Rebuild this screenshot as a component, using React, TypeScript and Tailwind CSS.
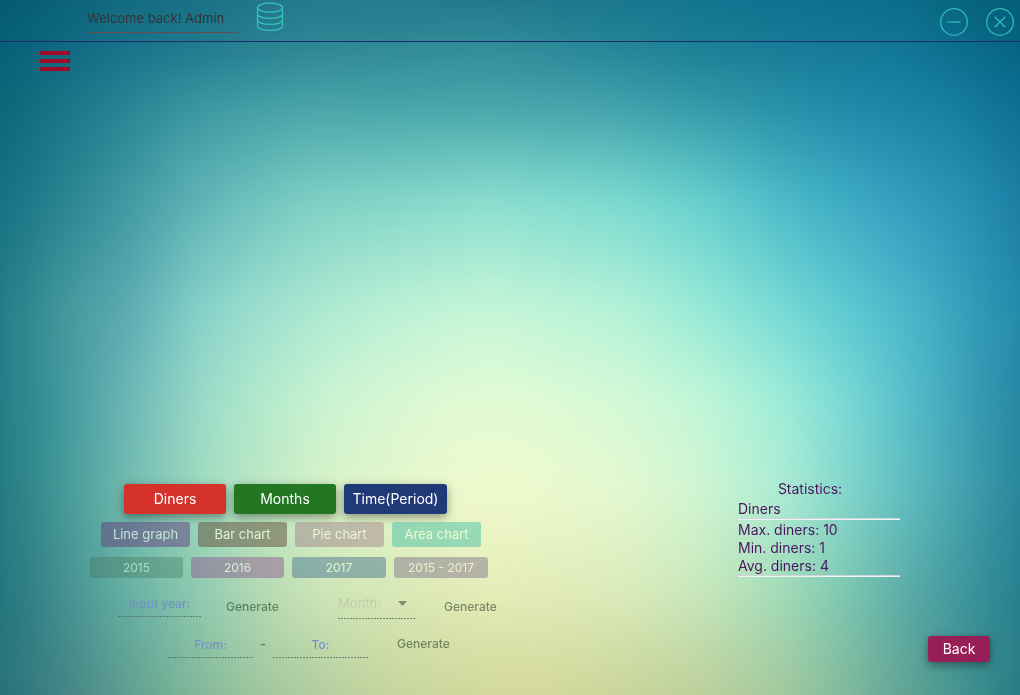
import React from "react";

// Horizontal bands of colour; each one fades in over the band above it.
const bands = [
  "bg-[linear-gradient(to_right,#045a6e_0%,#136b80_12%,#25788b_30%,#237689_48%,#117490_69%,#0b6d88_88%,#055c74_100%)]",
  "bg-[linear-gradient(to_right,#066078_0%,#16708a_11%,#2f8795_30%,#348f9b_48%,#1c8096_69%,#127898_88%,#066482_100%)] [mask-image:linear-gradient(to_bottom,transparent_0%,black_7%)]",
  "bg-[linear-gradient(to_right,#0d6577_0%,#207f8e_10%,#3d98a2_20%,#48a3a9_30%,#46a5aa_48%,#43a2ac_59%,#3299a8_69%,#1f89a8_83%,#177fa0_93%,#0c6f92_100%)] [mask-image:linear-gradient(to_bottom,transparent_7%,black_15%)]",
  "bg-[linear-gradient(to_right,#157080_0%,#38909c_10%,#62b6b8_20%,#7ed0c4_30%,#8cdfd0_48%,#7cdbd0_61%,#67d0cf_69%,#48b8c8_78%,#359fc0_88%,#2890b4_95%,#1b7ea3_100%)] [mask-image:linear-gradient(to_bottom,transparent_15%,black_29%)]",
  "bg-[linear-gradient(to_right,#237a86_0%,#44989c_6%,#5faeb5_13%,#85d0c8_19%,#9ddfd0_25%,#b0ead2_32%,#bcf1d6_38%,#c8f6d8_48%,#b6f2d8_61%,#9cecd7_68%,#7cdcd6_76%,#5dcbd2_83%,#49b4c9_90%,#2289a9_100%)] [mask-image:linear-gradient(to_bottom,transparent_29%,black_45%)]",
  "bg-[linear-gradient(to_right,#237a85_0%,#3f989d_6%,#71b9b8_13%,#9cdcc9_20%,#b5eacc_26%,#ccf4d2_32%,#e1fad4_44%,#e2fbd4_50%,#d5f9d6_61%,#c2f6d8_69%,#9eedd8_77%,#7bd9d6_83%,#51bac8_90%,#379ab3_96%,#2585a0_100%)] [mask-image:linear-gradient(to_bottom,transparent_45%,black_58%)]",
  "bg-[linear-gradient(to_right,#22777f_0%,#449998_6%,#74bdb0_13%,#a2dcc0_20%,#bfe8c3_26%,#d8f2c8_32%,#eef9cc_44%,#f0facc_50%,#e4f8d0_61%,#cff5d2_69%,#abebd4_77%,#83d6cb_83%,#5ab8bd_90%,#3d9aa8_96%,#27849a_100%)] [mask-image:linear-gradient(to_bottom,transparent_58%,black_71%)]",
  "bg-[linear-gradient(to_right,#20747c_0%,#448e90_6%,#68b2a5_13%,#92cbb0_20%,#b5dbb3_26%,#cfe5b6_32%,#e5ebb7_48%,#dbeab9_61%,#c6e6ba_69%,#a0dab6_77%,#7cc6b0_83%,#55a6a5_90%,#38909a_96%,#257d8c_100%)] [mask-image:linear-gradient(to_bottom,transparent_71%,black_86%)]",
  "bg-[linear-gradient(to_right,#27717a_0%,#438385_6%,#60a090_13%,#80b698_19%,#9cc39c_25%,#b3cd9d_32%,#c6d49c_39%,#d0d798_48%,#d2d798_54%,#bbce9a_69%,#a1c79d_77%,#80b89b_83%,#5b9f92_90%,#3c8d8c_96%,#2a7983_100%)] [mask-image:linear-gradient(to_bottom,transparent_86%,black_100%)]",
];

const topics = [
  { label: "Diners", style: "w-[102px] bg-[#d5322b]" },
  { label: "Months", style: "w-[102px] bg-[#237722]" },
  { label: "Time(Period)", style: "w-[103px] bg-[#203a78]" },
];

const charts = [
  { label: "Line graph", style: "bg-[#663c7c]/50 text-[#bfe6d6]" },
  { label: "Bar chart", style: "bg-[#5f4a35]/50 text-[#dcf3d6]" },
  { label: "Pie chart", style: "bg-[#9c7886]/45 text-[#e8f5d2]" },
  { label: "Area chart", style: "bg-[#45bfa5]/50 text-[#edfad2]" },
];

const years = [
  { label: "2015", style: "w-[93px] bg-[#406f55]/35 text-[#aadcc4]" },
  { label: "2016", style: "w-[93px] bg-[#8f508e]/45 text-[#d2efd3]" },
  { label: "2017", style: "w-[94px] bg-[#4a7894]/50 text-[#e3f4d0]" },
  { label: "2015 - 2017", style: "w-[94px] bg-[#7a6b8c]/45 text-[#eaf3cc]" },
];

const dashes =
  "bg-[repeating-linear-gradient(to_right,rgba(80,112,96,0.8)_0px,rgba(80,112,96,0.8)_2px,transparent_2px,transparent_3px)] bg-[length:100%_1px] bg-bottom bg-no-repeat";

const field =
  "h-7 text-center text-xs font-medium text-[#7393c2] outline-none placeholder:text-[#7393c2]";

function Generate() {
  return (
    <button className="mt-2.5 h-4 w-[52px] text-xs font-medium leading-4 text-[#30482e]/60" type="button">
      Generate
    </button>
  );
}

function DatabaseIcon() {
  return (
    <svg width="28" height="30" viewBox="0 0 28 30" fill="none" stroke="#35c3b8" strokeWidth="1.3" aria-hidden="true">
      <ellipse cx="14" cy="5.7" rx="12.5" ry="4.5" />
      <path d="M1.500 5.700v18.200c0 2.500 5 4.500 12.500 4.500s12.500-2 12.500-4.500V5.700M1.500 11.900c0 2.500 5 4.500 12.500 4.500s12.500-2 12.500-4.500M1.500 17.900c0 2.500 5 4.500 12.500 4.500s12.500-2 12.500-4.500" />
    </svg>
  );
}

export default function App() {
  return (
    <div className="relative isolate flex min-h-screen flex-col font-['Inter',sans-serif]">
      {bands.map((band) => (
        <div key={band} aria-hidden="true" className={`absolute inset-0 -z-10 ${band}`} />
      ))}
      <div aria-hidden="true" className="absolute inset-0 -z-10 backdrop-blur-lg" />

      <header className="flex h-[42px] shrink-0 items-start border-b border-[#1c2c68] pl-[87px] pr-1.5">
        <p className="mt-1 h-[29px] w-[151px] border-b border-[#684a50] text-[13px] leading-7 text-[#343438]">
          Welcome back! Admin
        </p>
        <button type="button" aria-label="Database" className="ml-[18px] mt-0.5">
          <DatabaseIcon />
        </button>
        <div className="ml-auto mt-2 flex gap-[18px]">
          <button type="button" aria-label="Minimize">
            <svg width="28" height="28" viewBox="0 0 28 28" fill="none" stroke="#2fbdb8" strokeWidth="1.3">
              <circle cx="14" cy="14" r="13.300" />
              <path d="M7.500 14h13" />
            </svg>
          </button>
          <button type="button" aria-label="Close">
            <svg width="28" height="28" viewBox="0 0 28 28" fill="none" stroke="#2fbdb8" strokeWidth="1.3">
              <circle cx="14" cy="14" r="13.300" />
              <path d="M8.700 8.700l10.600 10.600M19.300 8.700l-10.600 10.600" />
            </svg>
          </button>
        </div>
      </header>

      <button type="button" aria-label="Menu" className="ml-10 mt-[9px] flex w-[30px] flex-col gap-1">
        <span className="h-1 w-full bg-[#a20b25]" />
        <span className="h-1 w-full bg-[#a20b25]" />
        <span className="h-1 w-full bg-[#a20b25]" />
      </button>

      <main className="mt-auto flex justify-between pb-[33px] pl-[90px] pr-[30px]">
        <section className="w-[408px] py-1">
          <div className="flex gap-2 pl-[34px]">
            {topics.map((t) => (
              <button key={t.label} type="button" className={`h-[30px] rounded-[3px] text-sm text-white shadow-[0_3px_10px_rgba(0,0,0,0.4)] ${t.style}`}>
                {t.label}
              </button>
            ))}
          </div>
          <div className="mt-2 flex gap-2 pl-[11px]">
            {charts.map((c) => (
              <button key={c.label} type="button" className={`h-[25px] w-[89px] rounded-[3px] text-[13px] ${c.style}`}>
                {c.label}
              </button>
            ))}
          </div>
          <div className="mt-2.5 flex gap-2">
            {years.map((y) => (
              <button key={y.label} type="button" className={`h-[21px] rounded-[3px] text-xs ${y.style}`}>
                {y.label}
              </button>
            ))}
          </div>
          <div className="mt-[11px] flex items-start pl-7">
            <input aria-label="Input year" placeholder="Input year:" className={`w-[83px] ${field} ${dashes}`} />
            <div className="ml-[25px] flex">
              <Generate />
            </div>
            <div className="relative ml-[60px] flex">
              <select aria-label="Month" className={`h-[30px] w-[77px] appearance-none text-[13px] text-[#bfcfab] outline-none ${dashes}`}>
                <option>Month:</option>
              </select>
              <svg className="pointer-events-none absolute right-2 top-3" width="9" height="5" viewBox="0 0 9 5" aria-hidden="true">
                <path d="M0 0h9L4.500 5z" fill="#81916f" />
              </svg>
            </div>
            <div className="ml-[29px] flex">
              <Generate />
            </div>
          </div>
          <div className="mt-[11px] flex items-start pl-[78px]">
            <input aria-label="From" placeholder="From:" className={`w-[85px] ${field} ${dashes}`} />
            <span className="w-5 text-center text-sm leading-7 text-[#756a7a]">-</span>
            <input aria-label="To" placeholder="To:" className={`w-[95px] ${field} ${dashes}`} />
            <div className="-mt-1 ml-[29px] flex">
              <Generate />
            </div>
          </div>
        </section>

        <aside className="flex w-[252px] flex-col text-sm text-[#4d1560]">
          <div className="w-[162px]">
            <h2 className="pr-[18px] text-center leading-[18px]">Statistics:</h2>
            <p className="border-b border-[#cfd3dc] pt-0.5 leading-[18px] shadow-[0_1px_0_#eef6f4]">Diners</p>
            <div className="border-b border-[#cfd3dc] pt-0.5 leading-[18px] shadow-[0_1px_0_#eef6f4]">
              <p>Max. diners: 10</p>
              <p>Min. diners: 1</p>
              <p>Avg. diners: 4</p>
            </div>
          </div>
          <button type="button" className="mt-auto h-[26px] w-[62px] self-end rounded-[3px] bg-[#981e58] text-sm text-white shadow-[0_3px_10px_rgba(0,0,0,0.4)]">
            Back
          </button>
        </aside>
      </main>
    </div>
  );
}
